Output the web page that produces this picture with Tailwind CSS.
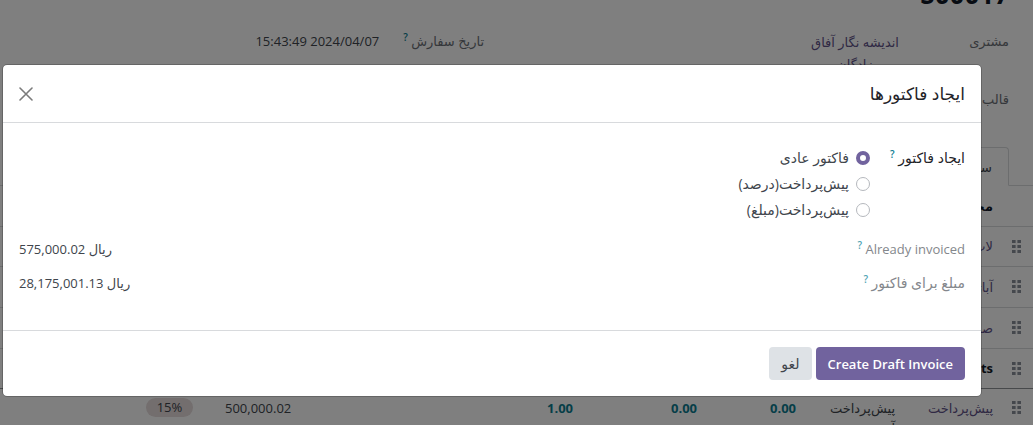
<!DOCTYPE html>
<html lang="fa" dir="rtl">
<head>
<meta charset="utf-8">
<title>ایجاد فاکتورها</title>
<script src="https://cdn.jsdelivr.net/npm/@tailwindcss/browser@4"></script>
</head>
<body class="relative h-screen overflow-hidden bg-white font-['Open_Sans','Noto_Sans','DejaVu_Sans',sans-serif] text-[13px] leading-5 text-[#40454c]">

<svg class="hidden" aria-hidden="true">
  <symbol id="grip" viewBox="0 0 9 13"><path d="M0 0h3.600v3H0zM5.400 0H9v3H5.400zM0 5h3.600v3H0zM5.400 5H9v3H5.400zM0 10h3.600v3H0zM5.400 10H9v3H5.400z" fill="currentColor"/></symbol>
</svg>

<!-- Sale order form behind the dialog -->
<main>
  <h1 class="-mt-6 h-[55px] ps-6 text-[26px] leading-9 font-bold text-[#111827]"><bdi>S00017</bdi></h1>
  <div class="flex ps-6">
    <dl class="grid grid-cols-[108px_92px] gap-y-[38px]">
      <dt class="text-[#6b6f76]">مشتری</dt>
      <dd class="h-5 text-center leading-[22px] whitespace-nowrap"><a href="#" class="text-[#5f5288]">اندیشه نگار آفاق<br>زادگان</a></dd>
      <dt class="text-[#6b6f76]">قالب</dt>
      <dd></dd>
    </dl>
    <dl class="ms-[325px] flex h-5 gap-6">
      <dt class="whitespace-nowrap text-[#6b6f76]">تاریخ سفارش <sup class="text-[10px] font-semibold text-[#0b7c90]">?</sup></dt>
      <dd class="whitespace-nowrap" dir="ltr">15:43:49 2024/04/07</dd>
    </dl>
  </div>
  <div class="mt-[38px] flex border-b border-[#d8dadd] ps-6">
    <button class="-mb-px h-[39px] rounded-t border border-b-white border-[#d8dadd] px-4">سطرهای سفارش</button>
  </div>
  <table class="w-full table-fixed text-start">
    <colgroup>
      <col class="w-8"><col class="w-[98px]"><col class="w-[98px]"><col class="w-[43px]"><col class="w-[99px]"><col class="w-[124px]"><col class="w-[322px]"><col>
    </colgroup>
    <thead>
      <tr class="h-10 border-b border-[#d8dadd]"><th></th><th class="px-2 text-start font-bold text-[#111827]">محصول</th><th colspan="6"></th></tr>
    </thead>
    <tbody>
      <tr class="h-10 border-b border-[#d8dadd]"><td class="ps-3 text-[#8b919b]"><svg class="h-[13px] w-[9px]"><use href="#grip"/></svg></td><td class="px-2"><a href="#" class="text-[#5f5288]">لاب</a></td><td colspan="6"></td></tr>
      <tr class="h-[41px] border-b border-[#d8dadd]"><td class="ps-3 text-[#8b919b]"><svg class="h-[13px] w-[9px]"><use href="#grip"/></svg></td><td class="px-2"><a href="#" class="text-[#5f5288]">آباژور</a></td><td colspan="6"></td></tr>
      <tr class="h-[41px] border-b border-[#d8dadd]"><td class="ps-3 text-[#8b919b]"><svg class="h-[13px] w-[9px]"><use href="#grip"/></svg></td><td class="px-2"><a href="#" class="text-[#5f5288]">صندلی</a></td><td colspan="6"></td></tr>
      <tr class="h-10 border-b border-[#8f9297]"><td class="ps-3 text-[#8b919b]"><svg class="h-[13px] w-[9px]"><use href="#grip"/></svg></td><td colspan="7" class="px-2 font-bold text-[#111827]">Down Payments</td></tr>
      <tr class="align-top">
        <td class="ps-3 pt-3 text-[#8b919b]"><svg class="h-[13px] w-[9px]"><use href="#grip"/></svg></td>
        <td class="px-2 pt-[9px] whitespace-nowrap"><a href="#" class="text-[#5f5288]">پیش‌پرداخت</a></td>
        <td class="px-2 pt-[9px] whitespace-nowrap">پیش‌پرداخت<br>آ</td>
        <td class="pe-2 pt-[9px] text-end font-bold text-[#0b7c90]">0.00</td>
        <td class="pe-2 pt-[9px] text-end font-bold text-[#0b7c90]">0.00</td>
        <td class="pe-2 pt-[9px] text-end font-bold text-[#0b7c90]">1.00</td>
        <td class="pe-2 pt-[9px] text-end">500,000.02</td>
        <td class="ps-6 pt-[9px]"><span class="flex h-[19px] w-[47px] items-center justify-center rounded-full bg-[#e6dcdc]" dir="ltr">15%</span></td>
      </tr>
    </tbody>
  </table>
</main>

<!-- Dialog -->
<div class="absolute inset-0 bg-black/50 ps-[52px] pe-[3px] pt-[65px]">
  <section role="dialog" aria-modal="true" aria-labelledby="dlg-title" class="rounded bg-white outline outline-black/20">
    <header class="flex h-[58px] items-center justify-between border-b border-[#d8dadd] px-4">
      <h2 id="dlg-title" class="text-[17px] text-[#1f2328]">ایجاد فاکتورها</h2>
      <button aria-label="بستن" class="text-[#7b7b7b]"><svg class="size-[14px]" viewBox="0 0 14 14" fill="none" stroke="currentColor" stroke-width="1.600" stroke-linecap="round"><path d="M1 1l12 12M13 1L1 13"/></svg></button>
    </header>
    <form>
      <div class="flex h-[207px] flex-col px-4 pt-[22px]">
        <div role="radiogroup" aria-labelledby="mode-label" class="flex text-sm">
          <div id="mode-label" class="w-[95px] leading-[26px] whitespace-nowrap text-[#1f2328]">ایجاد فاکتور <sup class="text-[10px] font-semibold text-[#0b7c90]">?</sup></div>
          <div class="flex flex-col">
            <label class="flex h-[26px] items-center gap-[7px]"><input type="radio" name="mode" checked class="size-[14px] appearance-none rounded-full border border-[#b5b8bd] checked:border-[4px] checked:border-[#71639e]">فاکتور عادی</label>
            <label class="flex h-[26px] items-center gap-[7px]"><input type="radio" name="mode" class="size-[14px] appearance-none rounded-full border border-[#b5b8bd] checked:border-[4px] checked:border-[#71639e]">پیش‌پرداخت(درصد)</label>
            <label class="flex h-[26px] items-center gap-[7px]"><input type="radio" name="mode" class="size-[14px] appearance-none rounded-full border border-[#b5b8bd] checked:border-[4px] checked:border-[#71639e]">پیش‌پرداخت(مبلغ)</label>
          </div>
        </div>
        <dl class="mt-4 flex flex-col gap-[14px]">
          <div class="flex h-5 justify-between"><dt class="text-[#84878c]">Already invoiced <sup class="text-[10px] font-semibold text-[#4fa5b4]">?</sup></dt><dd dir="ltr">575,000.02 ریال</dd></div>
          <div class="flex h-5 justify-between"><dt class="text-sm text-[#84878c]">مبلغ برای فاکتور <sup class="text-[10px] font-semibold text-[#4fa5b4]">?</sup></dt><dd dir="ltr">28,175,001.13 ریال</dd></div>
        </dl>
      </div>
      <footer class="flex h-[66px] items-center gap-1 border-t border-[#d8dadd] px-4">
        <button type="button" class="h-[33px] rounded bg-[#71639e] px-3 font-semibold text-white">Create Draft Invoice</button>
        <button type="button" class="h-[33px] rounded bg-[#dee2e6] px-3 text-sm">لغو</button>
      </footer>
    </form>
  </section>
</div>
</body>
</html>
